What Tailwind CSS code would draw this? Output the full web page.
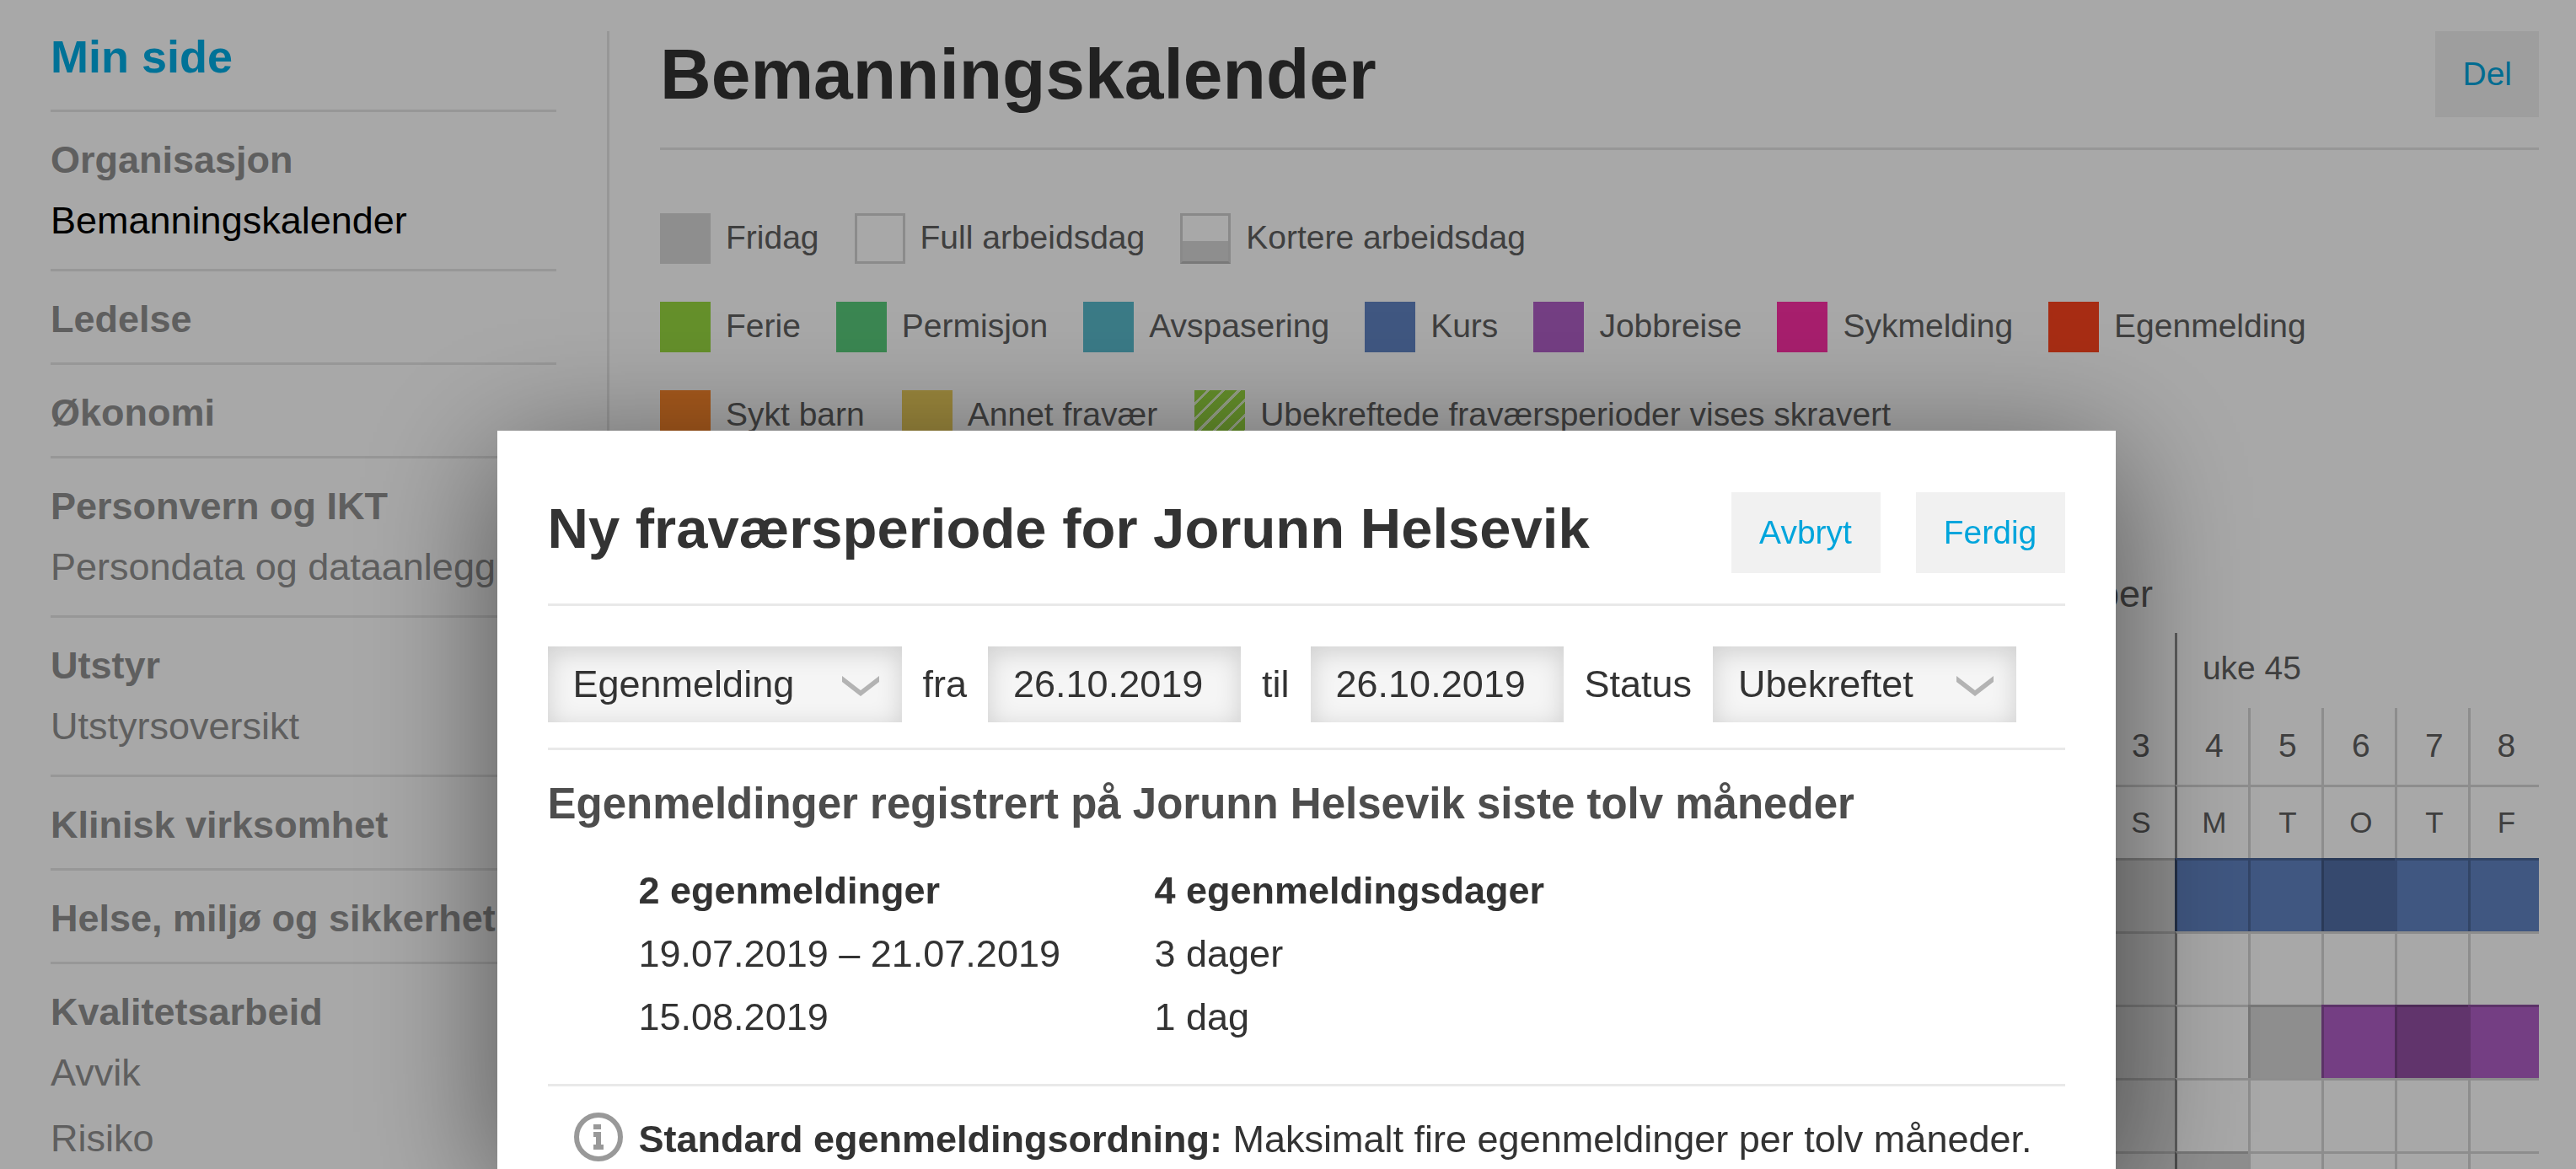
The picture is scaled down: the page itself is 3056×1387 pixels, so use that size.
<!DOCTYPE html>
<html lang="no">
<head>
  <meta charset="utf-8">
  <title>Bemanningskalender</title>
  <script src="https://cdn.jsdelivr.net/npm/@tailwindcss/browser@4"></script>
</head>
<body class="h-screen overflow-hidden bg-white font-['Helvetica_Neue','Liberation_Sans',sans-serif] text-[#333]">

  <div class="flex h-screen overflow-hidden pt-[37px] pl-[60px] pr-[44px]">

    <!-- Meny -->
    <nav class="w-[600px] shrink-0 text-[45px] text-[#909090] whitespace-nowrap">
      <a href="#" class="block pb-[33px] text-[54px] leading-[60px] font-bold text-[#00aee6]">Min side</a>
      <section class="border-t-3 border-[#e6e6e6] pt-[24px] pb-[18px]">
        <h2 class="leading-[66px] font-bold">Organisasjon</h2>
        <a href="#" class="block leading-[78px] text-black">Bemanningskalender</a>
      </section>
      <section class="border-t-3 border-[#e6e6e6] pt-[24px] pb-[18px]">
        <h2 class="leading-[66px] font-bold">Ledelse</h2>
      </section>
      <section class="border-t-3 border-[#e6e6e6] pt-[24px] pb-[18px]">
        <h2 class="leading-[66px] font-bold">Økonomi</h2>
      </section>
      <section class="border-t-3 border-[#e6e6e6] pt-[24px] pb-[18px]">
        <h2 class="leading-[66px] font-bold">Personvern og IKT</h2>
        <a href="#" class="block leading-[78px]">Persondata og dataanlegg</a>
      </section>
      <section class="border-t-3 border-[#e6e6e6] pt-[24px] pb-[18px]">
        <h2 class="leading-[66px] font-bold">Utstyr</h2>
        <a href="#" class="block leading-[78px]">Utstyrsoversikt</a>
      </section>
      <section class="border-t-3 border-[#e6e6e6] pt-[24px] pb-[18px]">
        <h2 class="leading-[66px] font-bold">Klinisk virksomhet</h2>
      </section>
      <section class="border-t-3 border-[#e6e6e6] pt-[24px] pb-[18px]">
        <h2 class="leading-[66px] font-bold">Helse, miljø og sikkerhet</h2>
      </section>
      <section class="border-t-3 border-[#e6e6e6] pt-[24px] pb-[18px]">
        <h2 class="leading-[66px] font-bold">Kvalitetsarbeid</h2>
        <a href="#" class="block leading-[78px]">Avvik</a>
        <a href="#" class="block leading-[78px]">Risiko</a>
      </section>
    </nav>

    <main class="ml-[60px] min-w-0 grow border-l-3 border-[#e6e6e6] pl-[60px]">
      <header class="flex justify-between border-b-3 border-[#e6e6e6] pb-[36px]">
        <h1 class="text-[84px] leading-[102px] font-bold">Bemanningskalender</h1>
        <button class="h-[102px] bg-[#f0f0f0] px-[32px] text-[39px] text-[#00a5dc]">Del</button>
      </header>

      <!-- Tegnforklaring -->
      <div class="mt-[75px] flex flex-col gap-[45px] text-[39px] leading-[58px] text-[#606060] whitespace-nowrap">
        <ul class="flex gap-[42px]">
          <li class="flex gap-[18px]"><span class="size-[60px] bg-[#d8d8d8]"></span>Fridag</li>
          <li class="flex gap-[18px]"><span class="size-[60px] border-3 border-[#d4d4d4]"></span>Full arbeidsdag</li>
          <li class="flex gap-[18px]"><span class="flex size-[60px] flex-col justify-end border-3 border-[#d0d0d0] border-b-[#b8b8b8]"><span class="h-[24px] bg-[#d8d8d8]"></span></span>Kortere arbeidsdag</li>
        </ul>
        <ul class="flex gap-[42px]">
          <li class="flex gap-[18px]"><span class="size-[60px] bg-[#99da41]"></span>Ferie</li>
          <li class="flex gap-[18px]"><span class="size-[60px] bg-[#59cc7c]"></span>Permisjon</li>
          <li class="flex gap-[18px]"><span class="size-[60px] bg-[#59bacc]"></span>Avspasering</li>
          <li class="flex gap-[18px]"><span class="size-[60px] bg-[#6184c4]"></span>Kurs</li>
          <li class="flex gap-[18px]"><span class="size-[60px] bg-[#b05fc7]"></span>Jobbreise</li>
          <li class="flex gap-[18px]"><span class="size-[60px] bg-[#fd2fa6]"></span>Sykmelding</li>
          <li class="flex gap-[18px]"><span class="size-[60px] bg-[#fd441e]"></span>Egenmelding</li>
        </ul>
        <ul class="flex gap-[44px]">
          <li class="flex gap-[18px]"><span class="size-[60px] bg-[#fd882b]"></span>Sykt barn</li>
          <li class="flex gap-[18px]"><span class="size-[60px] bg-[#ecce5c]"></span>Annet fravær</li>
          <li class="flex gap-[18px]"><span class="size-[60px] bg-[repeating-linear-gradient(135deg,#99da41_0_10px,#e6f6d0_10px_13px)]"></span>Ubekreftede fraværsperioder vises skravert</li>
        </ul>
      </div>

      <!-- Kalender -->
      <table class="mt-[152px] w-full table-fixed border-separate border-spacing-0 text-[39px] text-[#606060]">
        <colgroup>
          <col>
          <col class="w-[87px]">
          <col class="w-[87px]">
          <col class="w-[87px]">
          <col class="w-[87px]">
          <col class="w-[87px]">
          <col class="w-[87px]">
          <col class="w-[87px]">
          <col class="w-[84px]">
        </colgroup>
        <thead>
          <tr class="h-[76px] align-top text-[45px] leading-[60px]">
            <td></td>
            <th colspan="8" class="pl-[35px] text-left font-normal">november</th>
          </tr>
          <tr class="h-[89px]">
            <td></td>
            <td colspan="3"></td>
            <th colspan="5" class="border-l-3 border-black/46 pb-1 pl-[30px] text-left font-normal">uke 45</th>
          </tr>
          <tr class="h-[91px]">
            <td></td>
            <th class="border-l-3 border-black/16 pl-1 font-normal">1</th>
            <th class="border-l-3 border-black/16 pl-1 font-normal">2</th>
            <th class="border-l-3 border-black/16 pl-1 font-normal">3</th>
            <th class="border-l-3 border-black/46 pl-1 font-normal">4</th>
            <th class="border-l-3 border-black/16 pl-1 font-normal">5</th>
            <th class="border-l-3 border-black/16 pl-1 font-normal">6</th>
            <th class="border-l-3 border-black/16 pl-1 font-normal">7</th>
            <th class="border-l-3 border-black/16 pl-1 font-normal">8</th>
          </tr>
          <tr class="h-[87px] text-[35px]">
            <td></td>
            <th class="border-t-3 border-l-3 border-black/16 pl-1 font-normal">F</th>
            <th class="border-t-3 border-l-3 border-black/16 pl-1 font-normal">L</th>
            <th class="border-t-3 border-l-3 border-black/16 pl-1 font-normal">S</th>
            <th class="border-t-3 border-l-3 border-black/16 border-l-black/46 pl-1 font-normal">M</th>
            <th class="border-t-3 border-l-3 border-black/16 pl-1 font-normal">T</th>
            <th class="border-t-3 border-l-3 border-black/16 pl-1 font-normal">O</th>
            <th class="border-t-3 border-l-3 border-black/16 pl-1 font-normal">T</th>
            <th class="border-t-3 border-l-3 border-black/16 pl-1 font-normal">F</th>
          </tr>
        </thead>
        <tbody>
          <tr class="h-[87px]">
            <td></td>
            <td class="border-t-3 border-l-3 border-black/16"></td>
            <td class="border-t-3 border-l-3 border-black/16 bg-[#d8d8d8]"></td>
            <td class="border-t-3 border-l-3 border-black/16 bg-[#d8d8d8]"></td>
            <td class="border-t-3 border-l-3 border-black/20 border-l-black/46 bg-[#6184c4]"></td>
            <td class="border-t-3 border-l-3 border-black/20 bg-[#6184c4]"></td>
            <td class="border-t-3 border-l-3 border-black/20 bg-[#526fa8]"></td>
            <td class="border-t-3 border-l-3 border-black/20 border-l-[#526fa8] bg-[#6184c4]"></td>
            <td class="border-t-3 border-l-3 border-black/20 bg-[#6184c4]"></td>
          </tr>
          <tr class="h-[87px]">
            <td></td>
            <td class="border-t-3 border-l-3 border-black/16"></td>
            <td class="border-t-3 border-l-3 border-black/16 bg-[#d8d8d8]"></td>
            <td class="border-t-3 border-l-3 border-black/16 bg-[#d8d8d8]"></td>
            <td class="border-t-3 border-l-3 border-black/16 border-l-black/46"></td>
            <td class="border-t-3 border-l-3 border-black/16"></td>
            <td class="border-t-3 border-l-3 border-black/16"></td>
            <td class="border-t-3 border-l-3 border-black/16"></td>
            <td class="border-t-3 border-l-3 border-black/16"></td>
          </tr>
          <tr class="h-[87px]">
            <td></td>
            <td class="border-t-3 border-l-3 border-black/16"></td>
            <td class="border-t-3 border-l-3 border-black/16 bg-[#d8d8d8]"></td>
            <td class="border-t-3 border-l-3 border-black/16 bg-[#d8d8d8]"></td>
            <td class="border-t-3 border-l-3 border-black/16 border-l-black/46"></td>
            <td class="border-t-3 border-l-3 border-black/16 bg-[#d8d8d8]"></td>
            <td class="border-t-3 border-l-3 border-black/20 bg-[#b05fc7]"></td>
            <td class="border-t-3 border-l-3 border-black/20 bg-[#9350a5]"></td>
            <td class="border-t-3 border-l-3 border-black/20 border-l-[#9350a5] bg-[#b05fc7]"></td>
          </tr>
          <tr class="h-[87px]">
            <td></td>
            <td class="border-t-3 border-l-3 border-black/16"></td>
            <td class="border-t-3 border-l-3 border-black/16 bg-[#d8d8d8]"></td>
            <td class="border-t-3 border-l-3 border-black/16 bg-[#d8d8d8]"></td>
            <td class="border-t-3 border-l-3 border-black/16 border-l-black/46"></td>
            <td class="border-t-3 border-l-3 border-black/16"></td>
            <td class="border-t-3 border-l-3 border-black/16"></td>
            <td class="border-t-3 border-l-3 border-black/16"></td>
            <td class="border-t-3 border-l-3 border-black/16"></td>
          </tr>
          <tr class="h-[87px]">
            <td></td>
            <td class="border-t-3 border-l-3 border-black/16"></td>
            <td class="border-t-3 border-l-3 border-black/16 bg-[#d8d8d8]"></td>
            <td class="border-t-3 border-l-3 border-black/16 bg-[#d8d8d8]"></td>
            <td class="border-t-3 border-l-3 border-black/16 border-l-black/46 bg-[#d8d8d8]"></td>
            <td class="border-t-3 border-l-3 border-black/16"></td>
            <td class="border-t-3 border-l-3 border-black/16"></td>
            <td class="border-t-3 border-l-3 border-black/16"></td>
            <td class="border-t-3 border-l-3 border-black/16"></td>
          </tr>
        </tbody>
      </table>
    </main>
  </div>

  <!-- Dialog -->
  <div class="fixed inset-0 flex justify-center overflow-hidden bg-black/34 pt-[511px] pl-[43px]">
    <div role="dialog" aria-labelledby="dialogtittel" class="min-h-full w-full max-w-[1920px] bg-white px-[60px] pt-[73px] text-[45px] shadow-[0_30px_150px_rgba(0,0,0,0.5)]">
      <header class="flex border-b-3 border-[#e9e9e9] pb-[36px]">
        <h2 id="dialogtittel" class="grow text-[67px] leading-[86px] font-bold whitespace-nowrap">Ny fraværsperiode for Jorunn Helsevik</h2>
        <button class="mr-[42px] h-[96px] w-[177px] bg-[#f1f1f1] text-[39px] text-[#00a5dc]">Avbryt</button>
        <button class="h-[96px] w-[177px] bg-[#f1f1f1] text-[39px] text-[#00a5dc]">Ferdig</button>
      </header>

      <form class="flex items-center gap-[25px] border-b-3 border-[#e9e9e9] pt-[48px] pb-[30px]">
        <div class="relative">
          <select aria-label="Type fravær" class="h-[90px] w-[420px] appearance-none bg-[#f5f5f5] px-[30px] shadow-[inset_0_6px_30px_rgba(0,0,0,0.16)]">
            <option>Egenmelding</option>
          </select>
          <svg class="pointer-events-none absolute top-[35px] right-[27px] h-[24px] w-[44px]" viewBox="0 0 44 24" fill="#b3b3b3"><path d="M0 0L22 17L44 0V7L22 24L0 7Z"/></svg>
        </div>
        <label for="fra">fra</label>
        <input id="fra" type="text" value="26.10.2019" class="h-[90px] w-[300px] bg-[#f5f5f5] px-[30px] shadow-[inset_0_6px_30px_rgba(0,0,0,0.16)]">
        <label for="til">til</label>
        <input id="til" type="text" value="26.10.2019" class="h-[90px] w-[300px] bg-[#f5f5f5] px-[30px] shadow-[inset_0_6px_30px_rgba(0,0,0,0.16)]">
        <label for="status">Status</label>
        <div class="relative">
          <select id="status" class="h-[90px] w-[360px] appearance-none bg-[#f5f5f5] px-[30px] shadow-[inset_0_6px_30px_rgba(0,0,0,0.16)]">
            <option>Ubekreftet</option>
          </select>
          <svg class="pointer-events-none absolute top-[35px] right-[27px] h-[24px] w-[44px]" viewBox="0 0 44 24" fill="#b3b3b3"><path d="M0 0L22 17L44 0V7L22 24L0 7Z"/></svg>
        </div>
      </form>

      <section class="border-b-3 border-[#e9e9e9] pt-[34px] pb-[42px]">
        <h3 class="text-[51px] leading-[60px] font-bold text-[#4d4d4d] whitespace-nowrap">Egenmeldinger registrert på Jorunn Helsevik siste tolv måneder</h3>
        <table class="mt-[35px] ml-[108px] text-left leading-[75px]">
          <tr>
            <th class="w-[612px]">2 egenmeldinger</th>
            <th>4 egenmeldingsdager</th>
          </tr>
          <tr>
            <td>19.07.2019 – 21.07.2019</td>
            <td>3 dager</td>
          </tr>
          <tr>
            <td>15.08.2019</td>
            <td>1 dag</td>
          </tr>
        </table>
      </section>

      <div class="flex pt-[31px] pl-[31px]">
        <svg class="mr-[19px] size-[58px] shrink-0" viewBox="0 0 58 58" fill="#999"><circle cx="29" cy="29" r="26" fill="none" stroke="#999" stroke-width="6"/><path d="M23 14h9v6h-9zM23 23h9v15h3v6h-12v-6h3v-9h-3z"/></svg>
        <p class="leading-[64px] whitespace-nowrap"><b>Standard egenmeldingsordning:</b> Maksimalt fire egenmeldinger per tolv måneder.</p>
      </div>
    </div>
  </div>

</body>
</html>
